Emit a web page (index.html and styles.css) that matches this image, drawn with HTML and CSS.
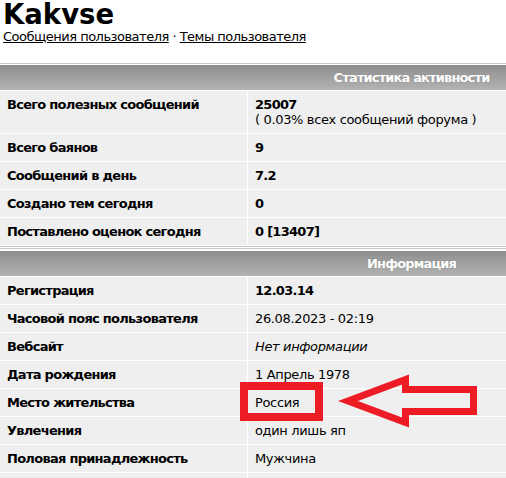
FILE: index.html
```html
<!DOCTYPE html>
<html lang="ru">
<head>
<meta charset="utf-8">
<title>Kakvse</title>
<link rel="stylesheet" href="styles.css">
</head>
<body>
<header class="top">
  <h1 class="title">Kakvse</h1>
  <div class="links"><a href="#">Сообщения пользователя</a> · <a href="#">Темы пользователя</a></div>
</header>
<main class="board">
  <section class="sec sec-stats">
    <div class="sec-head">Статистика активности</div>
    <div class="row"><div class="lbl">Всего полезных сообщений</div><div class="val"><b>25007</b><br>( 0.03% всех сообщений форума )</div></div>
    <div class="row"><div class="lbl">Всего баянов</div><div class="val"><b>9</b></div></div>
    <div class="row"><div class="lbl">Сообщений в день</div><div class="val"><b>7.2</b></div></div>
    <div class="row"><div class="lbl">Создано тем сегодня</div><div class="val"><b>0</b></div></div>
    <div class="row"><div class="lbl">Поставлено оценок сегодня</div><div class="val"><b>0 [13407]</b></div></div>
  </section>
  <section class="sec sec-info">
    <div class="sec-head">Информация</div>
    <div class="row"><div class="lbl">Регистрация</div><div class="val"><b>12.03.14</b></div></div>
    <div class="row"><div class="lbl">Часовой пояс пользователя</div><div class="val">26.08.2023 - 02:19</div></div>
    <div class="row"><div class="lbl">Вебсайт</div><div class="val"><i>Нет информации</i></div></div>
    <div class="row"><div class="lbl">Дата рождения</div><div class="val">1 Апрель 1978</div></div>
    <div class="row"><div class="lbl">Место жительства</div><div class="val">Россия</div></div>
    <div class="row"><div class="lbl">Увлечения</div><div class="val">один лишь яп</div></div>
    <div class="row"><div class="lbl">Половая принадлежность</div><div class="val">Мужчина</div></div>
    <div class="row"><div class="lbl">&nbsp;</div><div class="val">&nbsp;</div></div>
  </section>
</main>
<div class="mark-box"></div>
<svg class="mark-arrow" width="150" height="64" viewBox="330 370 150 64" xmlns="http://www.w3.org/2000/svg">
  <polygon points="348,401 405.5,379.5 405.5,389.5 473.5,389.5 473.5,411.5 405.5,411.5 405.5,422.5" fill="none" stroke="#ed1c24" stroke-width="7" stroke-linejoin="miter"/>
</svg>
</body>
</html>
```
FILE: styles.css
```css
html, body {
  margin: 0;
  padding: 0;
  background: #ffffff;
}
body {
  font-family: "DejaVu Sans", Verdana, sans-serif;
  font-size: 13px;
  letter-spacing: -0.35px;
  color: #000;
  position: relative;
}
b, .lbl, .sec-head {
  letter-spacing: -0.72px;
}
.top {
  padding-left: 3px;
  margin-bottom: 19px;
}
.title {
  margin: 0;
  font-size: 27.5px;
  line-height: 28px;
  font-weight: bold;
  letter-spacing: 0;
}
.links {
  margin-top: 1px;
  line-height: 15px;
  letter-spacing: -0.5px;
}
.links a {
  color: #000;
  text-decoration: underline;
}
.sec {
  border-top: 1px solid #c8c8c8;
  padding-top: 1px;
}
.sec-stats {
  border-bottom: 1px solid #c8c8c8;
  padding-bottom: 1px;
}
.sec-info {
  margin-top: 1px;
  padding-top: 2px;
}
.sec-head {
  height: 25px;
  line-height: 25px;
  padding-left: 317px;
  text-align: center;
  color: #fff;
  font-weight: bold;
  letter-spacing: -0.85px;
  background: linear-gradient(#8e8e8e, #b3b3b3);
  text-shadow: 0 0 1px rgba(0,0,0,0.25);
}
.row {
  display: grid;
  grid-template-columns: 247px 1fr;
  column-gap: 1px;
  margin-top: 1px;
}
.lbl, .val {
  background: #efefef;
  padding: 6px 7px;
  line-height: 15px;
}
.lbl {
  font-weight: bold;
}
.mark-box {
  position: absolute;
  left: 240px;
  top: 382px;
  width: 83px;
  height: 39px;
  box-sizing: border-box;
  border: 8px solid #ed1c24;
}
.mark-arrow {
  position: absolute;
  left: 330px;
  top: 370px;
}
```
